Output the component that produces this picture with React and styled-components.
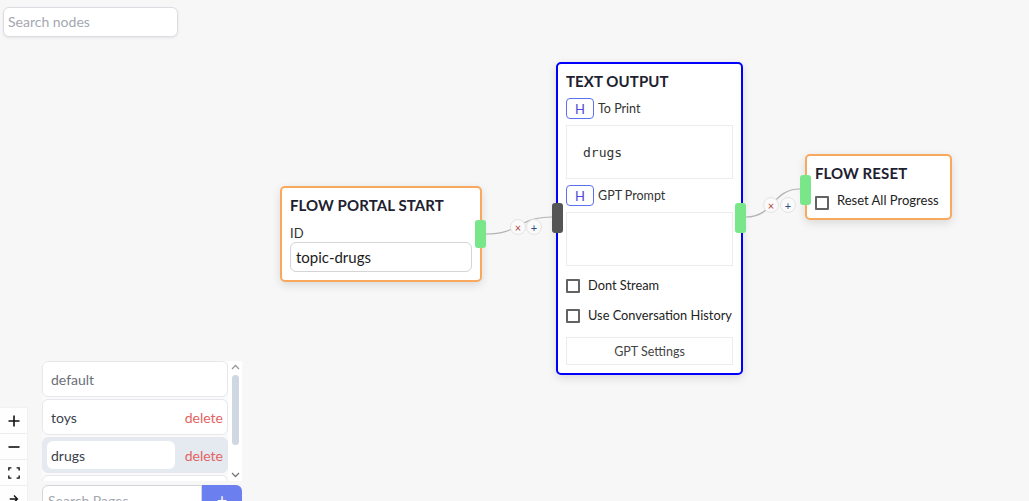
import React from "react";
import styled, { createGlobalStyle } from "styled-components";

const GlobalStyle = createGlobalStyle`
  html, body {
    margin: 0;
    padding: 0;
    background: #f7f7f7;
    font-family: Lato, "Noto Sans", sans-serif;
  }
  * { box-sizing: border-box; }
`;

const Canvas = styled.div`
  position: relative;
  width: 1029px;
  height: 501px;
  overflow: hidden;
  background: #f7f7f7;
`;

const SearchNodes = styled.div`
  position: absolute;
  left: 3px;
  top: 7px;
  width: 175px;
  height: 30px;
  background: #fff;
  border: 1px solid #dcdde3;
  border-radius: 6px;
  box-shadow: 0 1px 3px rgba(0, 0, 0, 0.08);
  color: #a4a8b0;
  font-size: 14px;
  padding: 5px 4px;
`;

const Edges = styled.svg`
  position: absolute;
  left: 0;
  top: 0;
  pointer-events: none;
`;

const EdgeButton = styled.div`
  position: absolute;
  left: ${(p) => p.$x - 8}px;
  top: ${(p) => p.$y - 8}px;
  width: 16px;
  height: 16px;
  border-radius: 50%;
  background: #fafafa;
  border: 1px solid #e4e4e4;
  display: flex;
  align-items: center;
  justify-content: center;
  font-size: 11px;
  line-height: 1;
  color: ${(p) => (p.$kind === "x" ? "#b0453a" : "#2b4c8a")};
`;

const Node = styled.div`
  position: absolute;
  left: ${(p) => p.$x}px;
  top: ${(p) => p.$y}px;
  width: ${(p) => p.$w}px;
  background: #fff;
  border: 2px solid ${(p) => p.$border};
  border-radius: 5px;
  padding: 8px;
  box-shadow: 0 3px 10px rgba(0, 0, 0, 0.12);
  display: flex;
  flex-direction: column;
  color: #222;
`;

const Title = styled.div`
  font-size: 15px;
  font-weight: 700;
  line-height: 18px;
  color: #1d2130;
  letter-spacing: 0.1px;
`;

const Handle = styled.div`
  position: absolute;
  left: ${(p) => p.$x}px;
  top: ${(p) => p.$y}px;
  width: 11px;
  height: ${(p) => p.$h}px;
  border-radius: 3px;
  background: ${(p) => (p.$dark ? "#555555" : "#7ae68a")};
`;

const FieldLabel = styled.div`
  font-size: 13px;
  line-height: 16px;
  margin-top: 11px;
  color: #333;
`;

const TextInput = styled.div`
  margin-top: 1px;
  height: 30px;
  border: 1px solid #d4d4d8;
  border-radius: 6px;
  padding: 0 5px;
  display: flex;
  align-items: center;
  font-size: 15px;
  color: #1c1c1c;
`;

const InputRow = styled.div`
  display: flex;
  align-items: center;
  gap: 4px;
  margin-top: ${(p) => p.$mt}px;
`;

const HBadge = styled.div`
  width: 28px;
  height: 21px;
  border: 1px solid #5c70f0;
  border-radius: 4px;
  display: flex;
  align-items: center;
  justify-content: center;
  font-size: 13px;
  color: #4b4bd8;
`;

const SmallLabel = styled.span`
  font-size: 12.5px;
  color: #333;
`;

const TextArea = styled.div`
  margin-top: 6px;
  height: 54px;
  border: 1px solid #ececec;
  padding: 0 16px;
  display: flex;
  align-items: center;
  font-family: "DejaVu Sans Mono", "Liberation Mono", monospace;
  font-size: 13px;
  color: #333;
`;

const CheckRow = styled.div`
  display: flex;
  align-items: flex-start;
  gap: 8px;
  margin-top: ${(p) => p.$mt}px;
`;

const Box = styled.span`
  flex: none;
  width: 14px;
  height: 14px;
  margin-top: ${(p) => p.$off || 0}px;
  border: 2px solid #636363;
  border-radius: 1px;
  background: #fff;
`;

const CheckText = styled.span`
  font-size: ${(p) => p.$size || 13}px;
  line-height: 15px;
  white-space: nowrap;
  color: #222;
`;

const SettingsButton = styled.div`
  margin-top: 14px;
  height: 28px;
  border: 1px solid #ececec;
  display: flex;
  align-items: center;
  justify-content: center;
  font-size: 12.5px;
  color: #444;
`;

const Controls = styled.div`
  position: absolute;
  left: 0;
  top: 408px;
  width: 27px;
  display: flex;
  flex-direction: column;
  background: #fefefe;
  box-shadow: 0 0 2px rgba(0, 0, 0, 0.08);
`;

const ControlButton = styled.div`
  height: 26px;
  display: flex;
  align-items: center;
  justify-content: center;
  border-bottom: 1px solid #eee;
`;

const PagesPanel = styled.div`
  position: absolute;
  left: 42px;
  top: 361px;
  width: 200px;
  display: flex;
  flex-direction: column;
  gap: 4px;
`;

const ListArea = styled.div`
  display: flex;
  height: 120px;
  overflow: hidden;
  background: #fafafa;
`;

const List = styled.div`
  width: 186px;
  display: flex;
  flex-direction: column;
  gap: 2px;
`;

const PageItem = styled.div`
  flex: none;
  height: 36px;
  border: 1px solid #e6e8ec;
  border-radius: 6px;
  background: ${(p) => (p.$active ? "#e5e9f0" : "#fff")};
  display: flex;
  align-items: center;
  justify-content: space-between;
  padding: 0 4px 0 ${(p) => (p.$active ? 4 : 8)}px;
  font-size: 14px;
`;

const PageName = styled.span`
  color: ${(p) => (p.$muted ? "#6b6f78" : "#3a3f4a")};
`;

const ActiveName = styled.span`
  width: 128px;
  height: 28px;
  background: #fff;
  border-radius: 6px;
  display: flex;
  align-items: center;
  padding-left: 4px;
  color: #3a3f4a;
`;

const Delete = styled.span`
  color: #e36262;
`;

const ScrollTrack = styled.div`
  width: 14px;
  display: flex;
  flex-direction: column;
  align-items: center;
  background: #fff;
`;

const Thumb = styled.div`
  width: 7px;
  height: 70px;
  margin: 2px 0 auto;
  border-radius: 4px;
  background: #cfd7e2;
`;

const Chevron = styled.div`
  height: 12px;
  display: flex;
  align-items: center;
  justify-content: center;
`;

const SearchRow = styled.div`
  display: flex;
  height: 30px;
`;

const SearchPages = styled.div`
  flex: 1;
  border: 1px solid #d4d6dc;
  border-radius: 6px 0 0 6px;
  background: #fff;
  color: #a4a8b0;
  font-size: 14px;
  padding: 6px 5px;
`;

const AddButton = styled.div`
  width: 40px;
  background: #6b80ee;
  border-radius: 0 6px 6px 0;
  color: #fff;
  display: flex;
  justify-content: center;
  padding-top: 4px;
  font-size: 18px;
`;

const Icon = ({ children, size = 14 }) => (
  <svg width={size} height={size} viewBox="0 0 14 14" fill="none" stroke="#111" strokeWidth="1.6">
    {children}
  </svg>
);

export default function App() {
  return (
    <Canvas>
      <GlobalStyle />
      <SearchNodes>Search nodes</SearchNodes>

      <Edges width="1029" height="501">
        <path d="M486 234 C 520 234, 518 217, 552 217" stroke="#b3b3b8" strokeWidth="1.2" fill="none" />
        <path d="M746 217 C 774 217, 772 189, 800 189" stroke="#b3b3b8" strokeWidth="1.2" fill="none" />
      </Edges>
      <EdgeButton $x={518} $y={227} $kind="x">×</EdgeButton>
      <EdgeButton $x={534} $y={227}>+</EdgeButton>
      <EdgeButton $x={771} $y={205} $kind="x">×</EdgeButton>
      <EdgeButton $x={788} $y={205}>+</EdgeButton>

      <Node $x={280} $y={186} $w={202} $border="#f9a95e">
        <Title>FLOW PORTAL START</Title>
        <FieldLabel>ID</FieldLabel>
        <TextInput>topic-drugs</TextInput>
        <Handle $x={193} $y={32} $h={28} />
      </Node>

      <Node $x={556} $y={62} $w={187} $border="#0000ff">
        <Title>TEXT OUTPUT</Title>
        <InputRow $mt={8}>
          <HBadge>H</HBadge>
          <SmallLabel>To Print</SmallLabel>
        </InputRow>
        <TextArea>drugs</TextArea>
        <InputRow $mt={6}>
          <HBadge>H</HBadge>
          <SmallLabel>GPT Prompt</SmallLabel>
        </InputRow>
        <TextArea />
        <CheckRow $mt={12}>
          <Box $off={1} />
          <CheckText $size={12.8}>Dont Stream</CheckText>
        </CheckRow>
        <CheckRow $mt={15}>
          <Box $off={1} />
          <CheckText $size={12.8}>Use Conversation History</CheckText>
        </CheckRow>
        <SettingsButton>GPT Settings</SettingsButton>
        <Handle $x={-6} $y={139} $h={30} $dark />
        <Handle $x={177} $y={139} $h={30} />
      </Node>

      <Node $x={805} $y={154} $w={147} $border="#f9a95e">
        <Title>FLOW RESET</Title>
        <CheckRow $mt={11}>
          <Box $off={3} />
          <CheckText>Reset All Progress</CheckText>
        </CheckRow>
        <Handle $x={-7} $y={19} $h={30} />
      </Node>

      <PagesPanel>
        <ListArea>
          <List>
            <PageItem>
              <PageName $muted>default</PageName>
            </PageItem>
            <PageItem>
              <PageName>toys</PageName>
              <Delete>delete</Delete>
            </PageItem>
            <PageItem $active>
              <ActiveName>drugs</ActiveName>
              <Delete>delete</Delete>
            </PageItem>
            <PageItem />
          </List>
          <ScrollTrack>
            <Chevron>
              <svg width="9" height="6" viewBox="0 0 9 6"><path d="M1 5 L4.5 1.5 L8 5" stroke="#999" strokeWidth="1.3" fill="none" /></svg>
            </Chevron>
            <Thumb />
            <Chevron>
              <svg width="9" height="6" viewBox="0 0 9 6"><path d="M1 1 L4.5 4.5 L8 1" stroke="#777" strokeWidth="1.3" fill="none" /></svg>
            </Chevron>
          </ScrollTrack>
        </ListArea>
        <SearchRow>
          <SearchPages>Search Pages</SearchPages>
          <AddButton>+</AddButton>
        </SearchRow>
      </PagesPanel>

      <Controls>
        <ControlButton>
          <Icon><path d="M7 1.5 V12.5 M1.5 7 H12.5" /></Icon>
        </ControlButton>
        <ControlButton>
          <Icon><path d="M1.5 7 H12.5" /></Icon>
        </ControlButton>
        <ControlButton>
          <Icon size={12}><path d="M1 4 V1 H4 M10 1 H13 V4 M13 10 V13 H10 M4 13 H1 V10" /></Icon>
        </ControlButton>
        <ControlButton>
          <Icon size={12}><path d="M2 7 H11 M7 3 L11 7 L7 11" /></Icon>
        </ControlButton>
      </Controls>
    </Canvas>
  );
}
